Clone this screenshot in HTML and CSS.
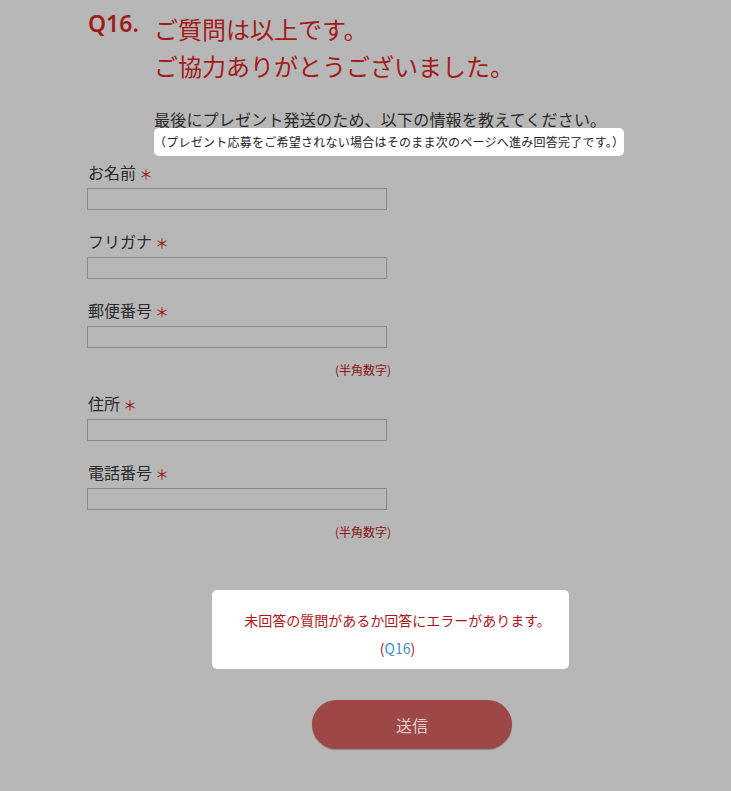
FILE: index.html
```html
<!DOCTYPE html>
<html lang="ja">
<head>
    <meta charset="UTF-8">
    <meta name="viewport" content="width=device-width, initial-scale=1.0">
    <title>アンケート Q16</title>
    <link rel="stylesheet" href="styles.css">
</head>
<body>
<div class="page">
    <div class="question">
        <div class="qnum">Q16.</div>
        <h1 class="qtitle">ご質問は以上です。<br>ご協力ありがとうございました。</h1>
    </div>

    <div class="intro">
        <p class="lead">最後にプレゼント発送のため、以下の情報を教えてください。</p>
        <span class="hint">（プレゼント応募をご希望されない場合はそのまま次のページへ進み回答完了です。）</span>
    </div>

    <form class="form">
        <div class="field">
            <label class="label" for="name">お名前<span class="req">＊</span></label>
            <input type="text" id="name" class="input">
        </div>
        <div class="field">
            <label class="label" for="kana">フリガナ<span class="req">＊</span></label>
            <input type="text" id="kana" class="input">
        </div>
        <div class="field has-note">
            <label class="label" for="zip">郵便番号<span class="req">＊</span></label>
            <input type="text" id="zip" class="input">
            <div class="note">(半角数字)</div>
        </div>
        <div class="field">
            <label class="label" for="addr">住所<span class="req">＊</span></label>
            <input type="text" id="addr" class="input">
        </div>
        <div class="field has-note">
            <label class="label" for="tel">電話番号<span class="req">＊</span></label>
            <input type="text" id="tel" class="input">
            <div class="note">(半角数字)</div>
        </div>
    </form>

    <div class="error">
        <p class="error-msg">未回答の質問があるか回答にエラーがあります。</p>
        <p class="error-link">(<a href="#">Q16</a>)</p>
    </div>

    <button type="button" class="submit">送信</button>
</div>
</body>
</html>
```

FILE: styles.css
```css
body {
    margin: 0;
    background-color: #b7b7b7;
    font-family: "Noto Sans CJK JP", "Noto Sans", sans-serif;
    color: #2b2b2b;
}

.page {
    padding: 10px 0 40px 88px;
}

/* question title */
.question {
    display: flex;
}
.qnum {
    width: 66px;
    flex-shrink: 0;
    font-family: "Noto Sans", sans-serif;
    font-size: 23px;
    font-weight: 600;
    line-height: 24px;
    padding-top: 1px;
    color: #a01c1c;
}
.qtitle {
    margin: 0;
    font-size: 24px;
    font-weight: normal;
    line-height: 37px;
    color: #a31c1c;
}

/* intro */
.intro {
    padding-left: 66px;
    margin-top: 26px;
}
.lead {
    margin: 0;
    font-size: 16px;
    line-height: 18px;
    letter-spacing: 0.2px;
}
.hint {
    display: inline-block;
    background: #fff;
    border-radius: 5px;
    font-size: 12px;
    line-height: 14px;
    letter-spacing: 0.25px;
    padding: 7px 0;
    color: #222;
}

/* form */
.form {
    width: 303px;
    margin-top: 4px;
}
.field {
    margin-bottom: 19px;
}
.field.has-note {
    margin-bottom: 14px;
}
.label {
    display: block;
    height: 24px;
    font-size: 16px;
    line-height: 24px;
    margin-bottom: 4px;
}
.req {
    color: #9a1a1a;
    font-size: 14px;
    line-height: 1;
    margin-left: 3px;
}
.input {
    display: block;
    box-sizing: border-box;
    width: 300px;
    height: 22px;
    margin: 0 0 0 -1px;
    border: 1px solid #8a8a8a;
    background: none;
    outline: none;
}
.note {
    margin-top: 15px;
    text-align: right;
    font-size: 12px;
    line-height: 14px;
    color: #8c1515;
}

/* error box */
.error {
    width: 357px;
    box-sizing: border-box;
    margin: 51px 0 0 124px;
    padding: 16px 0 7px 14px;
    background: #fff;
    border-radius: 5px;
    text-align: center;
    font-size: 14px;
    color: #b01616;
}
.error p {
    margin: 0;
    line-height: 28px;
}
.error a {
    color: #3a8fd4;
    text-decoration: none;
}

/* submit */
.submit {
    display: block;
    margin: 31px 0 0 224px;
    width: 200px;
    height: 49px;
    border: none;
    border-radius: 25px;
    background: #9e4747;
    box-shadow: 0 1px 1px rgba(0, 0, 0, 0.25);
    color: #e3cccc;
    font-family: "Noto Sans CJK JP", sans-serif;
    font-size: 16px;
}
```
